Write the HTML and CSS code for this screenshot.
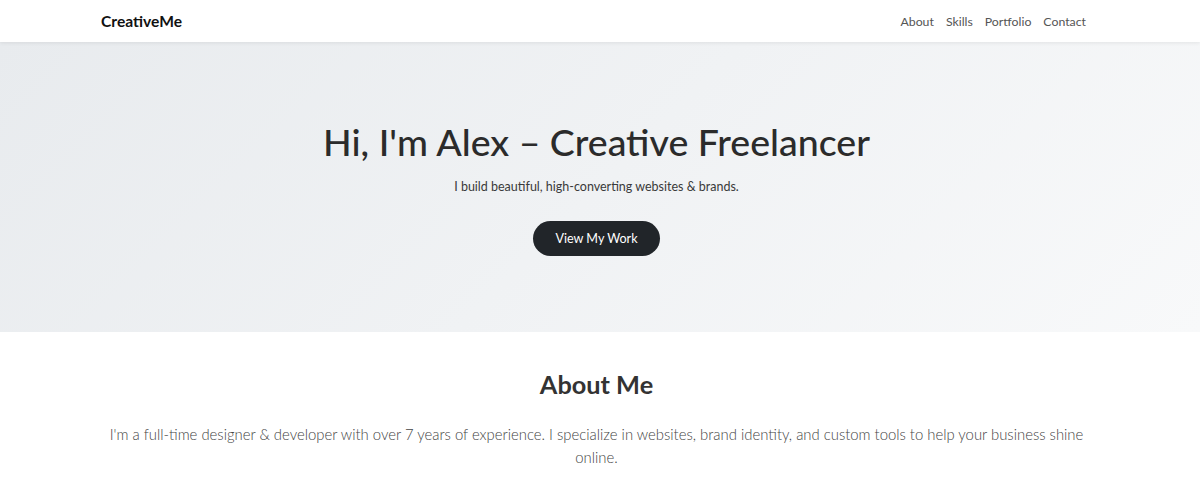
FILE: index.html
```html
<!DOCTYPE html>
<html lang="en">
<head>
<meta charset="utf-8">
<title>CreativeMe</title>
<link rel="stylesheet" href="styles.css">
</head>
<body>
<header class="site-header">
  <div class="container header-inner">
    <a class="logo" href="#">CreativeMe</a>
    <nav class="nav">
      <a href="#about">About</a>
      <a href="#skills">Skills</a>
      <a href="#portfolio">Portfolio</a>
      <a href="#contact">Contact</a>
    </nav>
  </div>
</header>
<section class="hero">
  <h1 class="hero-title">Hi, I'm Alex – Creative Freelancer</h1>
  <p class="hero-sub">I build beautiful, high-converting websites &amp; brands.</p>
  <a class="btn" href="#portfolio">View My Work</a>
</section>
<section class="about" id="about">
  <div class="container">
    <h2 class="section-title">About Me</h2>
    <p class="about-text">I'm a full-time designer &amp; developer with over 7 years of experience. I specialize in websites, brand identity, and custom tools to help your business shine online.</p>
  </div>
</section>
</body>
</html>
```
FILE: styles.css
```css
* { box-sizing: border-box; }
html, body { margin: 0; padding: 0; }
body {
  font-family: Lato, "Open Sans", sans-serif;
  color: #333;
  background: #fff;
}
a { text-decoration: none; }
.container {
  width: 1000px;
  margin: 0 auto;
}
.site-header {
  background: #fff;
  height: 42px;
  box-shadow: 0 1px 4px rgba(0,0,0,0.08);
  position: relative;
  z-index: 1;
}
.header-inner {
  height: 42px;
  display: flex;
  align-items: center;
  justify-content: space-between;
}
.logo {
  font-size: 15.6px;
  font-weight: 700;
  color: #111;
  margin-left: 1px;
}
.nav {
  display: flex;
  gap: 12px;
  margin-right: 14px;
}
.nav a {
  font-size: 12.3px;
  color: #555;
}
.hero {
  height: 290px;
  padding: 78px 7px 0 0;
  text-align: center;
  background: linear-gradient(135deg, #e8ebee 0%, #f8f9fa 100%);
}
.hero-title {
  margin: 0;
  font-size: 37.5px;
  line-height: 43px;
  font-weight: 500;
  color: #2b2b2b;
}
.hero-sub {
  margin: 14px 0 0;
  font-size: 12.5px;
  line-height: 20px;
  color: #3a3a3a;
}
.btn {
  display: inline-block;
  margin-top: 24px;
  padding: 9px 22px;
  font-size: 12.6px;
  line-height: 17px;
  color: #fff;
  background: #212529;
  border-radius: 20px;
}
.about {
  padding: 38px 7px 0 0;
  text-align: center;
}
.about .container {
  width: 1000px;
}
.section-title {
  margin: 0;
  font-size: 25.3px;
  line-height: 29px;
  font-weight: 700;
  color: #333;
}
.about-text {
  margin: 24px auto 0;
  font-size: 14.87px;
  line-height: 23px;
  font-weight: 300;
  color: #444;
}
```
